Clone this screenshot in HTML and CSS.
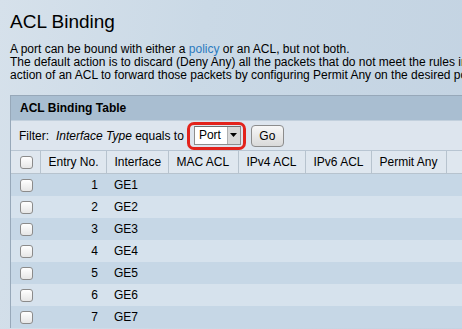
FILE: index.html
```html
<!DOCTYPE html>
<html>
<head>
<meta charset="utf-8">
<link rel="stylesheet" href="styles.css">
</head>
<body>
<div class="page">
  <h1 class="title">ACL Binding</h1>
  <p class="intro">A port can be bound with either a <a class="link" href="#">policy</a> or an ACL, but not both.<br>The default action is to discard (Deny Any) all the packets that do not meet the rules in the ACL. You can override the default<br>action of an ACL to forward those packets by configuring Permit Any on the desired port.</p>
  <div class="panel">
    <div class="panel-title">ACL Binding Table</div>
    <div class="filter">
      <span class="filter-label">Filter:</span>
      <span><i>Interface Type</i> equals to</span>
      <span class="highlight">
        <span class="select"><span class="select-val">Port</span><span class="select-arrow"><svg width="7" height="4" viewBox="0 0 7 4"><path d="M0 0h7L3.5 4z" fill="#000"/></svg></span></span>
      </span>
      <span class="btn">Go</span>
    </div>
    <table class="grid">
      <colgroup>
        <col class="c-cb"><col class="c-no"><col class="c-if"><col class="c-mac"><col class="c-v4"><col class="c-v6"><col class="c-pa"><col class="c-x">
      </colgroup>
      <thead>
        <tr><th><span class="cb"></span></th><th>Entry No.</th><th>Interface</th><th>MAC ACL</th><th>IPv4 ACL</th><th>IPv6 ACL</th><th>Permit Any</th><th></th></tr>
      </thead>
      <tbody>
        <tr class="odd"><td><span class="cb"></span></td><td class="num">1</td><td>GE1</td><td></td><td></td><td></td><td></td><td></td></tr>
        <tr><td><span class="cb"></span></td><td class="num">2</td><td>GE2</td><td></td><td></td><td></td><td></td><td></td></tr>
        <tr class="odd"><td><span class="cb"></span></td><td class="num">3</td><td>GE3</td><td></td><td></td><td></td><td></td><td></td></tr>
        <tr><td><span class="cb"></span></td><td class="num">4</td><td>GE4</td><td></td><td></td><td></td><td></td><td></td></tr>
        <tr class="odd"><td><span class="cb"></span></td><td class="num">5</td><td>GE5</td><td></td><td></td><td></td><td></td><td></td></tr>
        <tr><td><span class="cb"></span></td><td class="num">6</td><td>GE6</td><td></td><td></td><td></td><td></td><td></td></tr>
        <tr class="odd"><td><span class="cb"></span></td><td class="num">7</td><td>GE7</td><td></td><td></td><td></td><td></td><td></td></tr>
      </tbody>
    </table>
  </div>
</div>
</body>
</html>
```
FILE: styles.css
```css
html, body {
  margin: 0;
  padding: 0;
  width: 462px;
  height: 329px;
  overflow: hidden;
}
body {
  background: linear-gradient(100deg, #d6e1eb 0%, #cad9e6 40%, #c3d3e2 100%);
  font-family: "Liberation Sans", Arial, sans-serif;
  color: #000;
}
.page {
  padding: 0 0 0 10px;
  white-space: nowrap;
}
.title {
  margin: 0;
  padding-top: 11px;
  font-size: 19px;
  font-weight: normal;
  line-height: 22px;
}
.intro {
  margin: 10px 0 0 0;
  font-size: 12px;
  line-height: 13px;
}
.link {
  color: #2b7bbf;
  text-decoration: none;
}
.panel {
  margin-top: 13px;
  width: 600px;
  border: 1px solid #97a8b9;
  border-right: none;
  border-bottom: none;
}
.panel-title {
  height: 24px;
  line-height: 24px;
  padding-left: 9px;
  background: #a9bed1;
  font-size: 12px;
  font-weight: bold;
  border-bottom: 1px solid #c2d0dd;
}
.filter {
  height: 29px;
  display: flex;
  align-items: center;
  background: #dde5ee;
  font-size: 12px;
  padding-left: 8px;
  border-bottom: 1px solid #b8c5d2;
}
.filter-label {
  margin-right: 7px;
}
.highlight {
  display: inline-flex;
  margin-left: 3px;
  border: 3px solid #e3231c;
  border-radius: 7px;
  padding: 1px 2px 2px 4px;
}
.select {
  display: inline-flex;
  width: 47px;
  height: 19px;
  box-sizing: border-box;
  border: 1px solid #8d8d8d;
  border-top-color: #6f6f6f;
  background: #fff;
  font-size: 12px;
}
.select-val {
  flex: 1;
  padding-left: 4px;
  line-height: 17px;
}
.select-arrow {
  width: 12px;
  background: #d8d8d8;
  border-left: 1px solid #b0b0b0;
  display: flex;
  align-items: center;
  justify-content: center;
}
.btn {
  margin-left: 5px;
  width: 33px;
  height: 22px;
  box-sizing: border-box;
  border: 1px solid #8c8c8c;
  border-radius: 4px;
  background: linear-gradient(#f7f7f7, #d9d9d9);
  font-size: 12px;
  display: flex;
  align-items: center;
  justify-content: center;
}
.grid {
  border-collapse: collapse;
  table-layout: fixed;
  width: 589px;
  font-size: 12px;
}
.c-cb { width: 29px; }
.c-no { width: 66px; }
.c-if { width: 62px; }
.c-mac { width: 70px; }
.c-v4 { width: 67px; }
.c-v6 { width: 66px; }
.c-pa { width: 75px; }
.c-x { width: 154px; }
.grid th {
  height: 22px;
  padding: 0 0 0 8px;
  text-align: left;
  font-weight: normal;
  background: #dfe7ef;
  border-right: 1px solid #b7c3ce;
  border-bottom: 1px solid #b7c3ce;
}
.grid th:first-child, .grid td:first-child {
  padding-left: 9px;
}
.grid td {
  height: 22px;
  padding: 0 0 0 8px;
  background: #d6e2ed;
}
.grid tr.odd td {
  background: #c6d7e6;
}
.grid td.num {
  text-align: right;
  padding: 0 8px 0 0;
}
.cb {
  display: block;
  width: 11px;
  height: 11px;
  border: 1px solid #8b8b8b;
  border-radius: 3px;
  background: linear-gradient(#ffffff, #e6e6e6);
}
```
